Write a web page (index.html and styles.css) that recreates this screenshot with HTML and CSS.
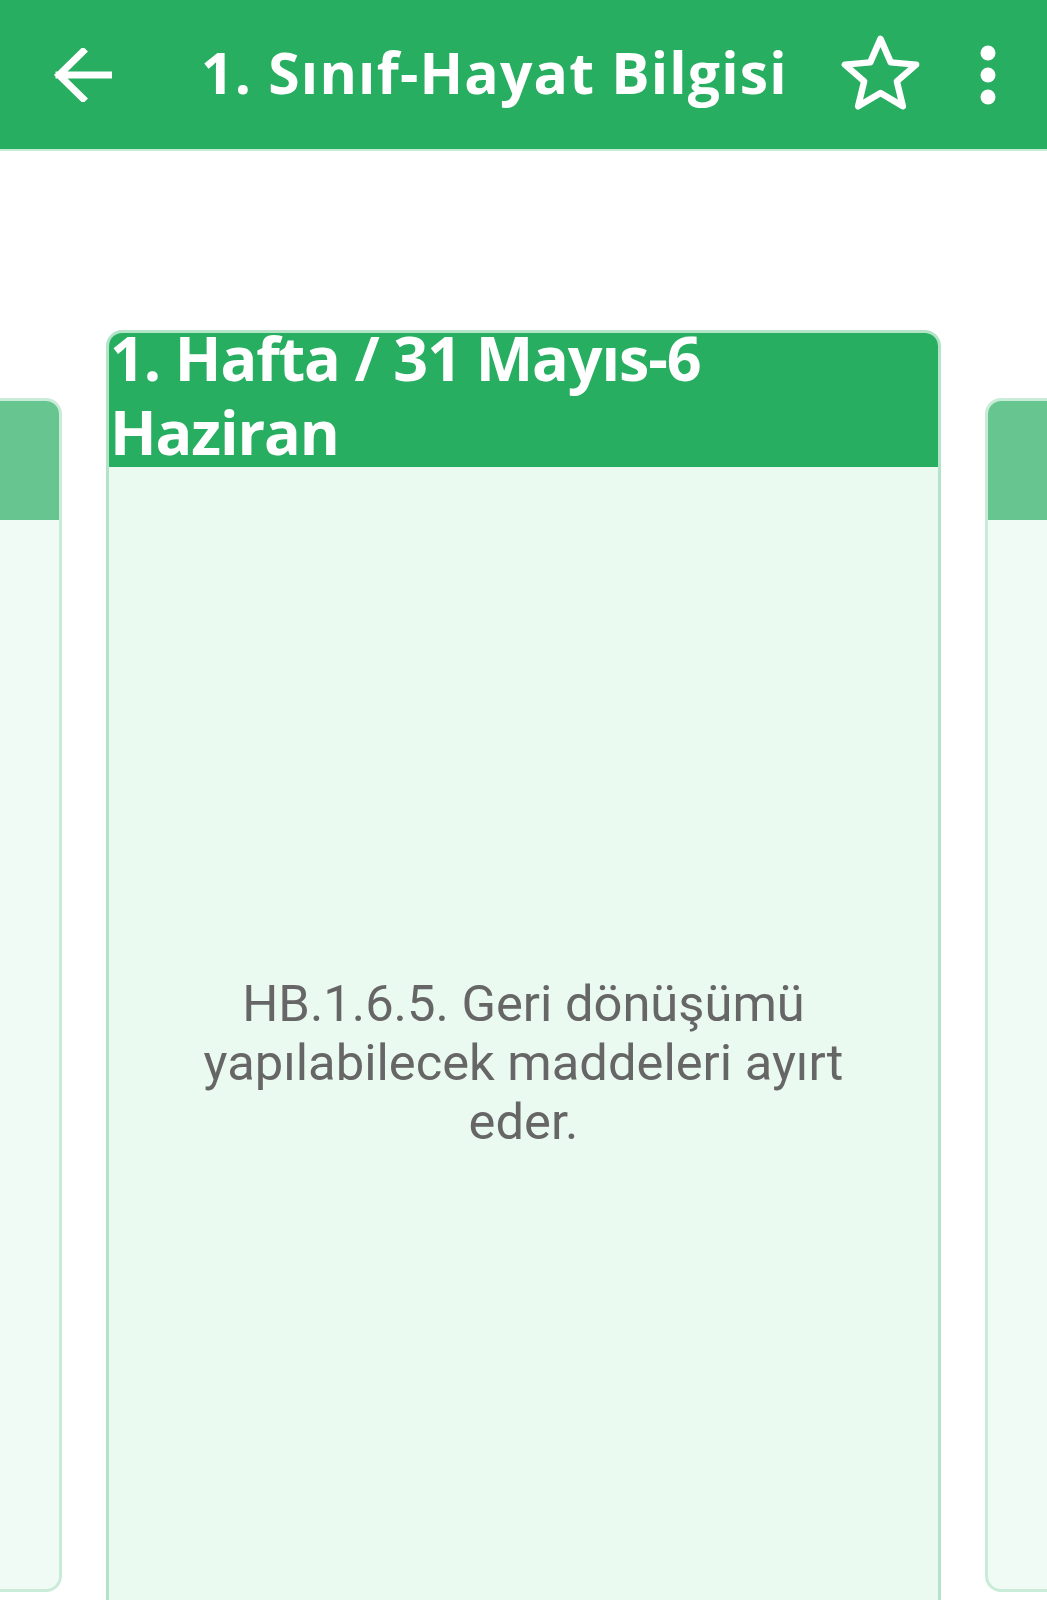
FILE: index.html
```html
<!DOCTYPE html>
<html lang="tr">
<head>
<meta charset="utf-8">
<title>1. Sınıf-Hayat Bilgisi</title>
<link rel="stylesheet" href="styles.css">
</head>
<body>
<header class="appbar">
  <svg class="back" viewBox="0 0 59 54" aria-hidden="true">
    <path d="M56 27 H6 M30 3.5 L6 27 L30 50.5" fill="none" stroke="#fff" stroke-width="7" stroke-linecap="square" stroke-linejoin="miter"/>
  </svg>
  <h1 class="title">1. Sınıf-Hayat Bilgisi</h1>
  <svg class="star" viewBox="0 0 24 24" aria-hidden="true">
    <polygon points="12,2.6 14.7,8.8 21.4,9.4 16.3,13.8 17.9,20.4 12,16.9 6.1,20.4 7.7,13.8 2.6,9.4 9.3,8.8" fill="none" stroke="#fff" stroke-width="1.7" stroke-linejoin="round"/>
  </svg>
  <svg class="more" viewBox="0 0 20 60" aria-hidden="true">
    <circle cx="10" cy="8" r="7.5" fill="#fff"/>
    <circle cx="10" cy="30" r="7.5" fill="#fff"/>
    <circle cx="10" cy="52" r="7.5" fill="#fff"/>
  </svg>
</header>
<main class="pager">
  <section class="card card-side">
    <div class="card-head"></div>
    <div class="card-body"></div>
  </section>
  <section class="card card-main">
    <div class="card-head"><h2 class="week">1. Hafta / 31 Mayıs-6 Haziran</h2></div>
    <div class="card-body"><p class="goal">HB.1.6.5. Geri dönüşümü yapılabilecek maddeleri ayırt eder.</p></div>
  </section>
  <section class="card card-side">
    <div class="card-head"></div>
    <div class="card-body"></div>
  </section>
</main>
</body>
</html>
```
FILE: styles.css
```css
html, body {
  margin: 0;
  padding: 0;
  height: 1600px;
  overflow: hidden;
  background: #ffffff;
}
body {
  font-family: Roboto, "Noto Sans", sans-serif;
}
.appbar {
  height: 149px;
  background: #27ae60;
  border-bottom: 2px solid #c6eed7;
  display: flex;
  align-items: center;
  padding: 0 49px 0 53px;
  box-sizing: content-box;
}
.back {
  width: 59px;
  height: 54px;
  flex: none;
}
.title {
  flex: 1;
  margin: 0 0 6px 89px;
  font-family: "Open Sans", "Noto Sans", sans-serif;
  font-weight: 700;
  font-size: 57px;
  line-height: 64px;
  color: #fff;
  white-space: nowrap;
  letter-spacing: 1.2px;
}
.star {
  width: 91px;
  height: 91px;
  flex: none;
}
.more {
  width: 20px;
  height: 60px;
  flex: none;
  margin-left: 52px;
}
.pager {
  display: flex;
  justify-content: center;
  align-items: center;
  gap: 44px;
  padding-top: 179px;
  overflow: hidden;
}
.card {
  flex: none;
  box-sizing: border-box;
  border: 3px solid #b3e4c8;
  border-radius: 16px;
  background: #eafaf1;
  display: flex;
  flex-direction: column;
}
.card-main {
  width: 835px;
  height: 1330px;
}
.card-side {
  width: 750px;
  height: 1194px;
  opacity: 0.7;
}
.card-head {
  background: #27ae60;
  border-radius: 13px 13px 0 0;
  height: 134px;
  flex: none;
  padding: 0 1px;
}
.card-side .card-head {
  height: 119px;
}
.week {
  margin: -12px 0 0;
  max-width: 700px;
  font-family: "Open Sans", "Noto Sans", sans-serif;
  font-weight: 700;
  font-size: 61px;
  line-height: 74px;
  color: #fff;
  letter-spacing: -1.1px;
}
.card-body {
  flex: 1;
  display: flex;
  align-items: center;
  justify-content: center;
  padding: 0 60px;
}
.goal {
  margin: 0;
  text-align: center;
  font-family: Roboto, "Noto Sans", sans-serif;
  font-size: 50.7px;
  line-height: 59px;
  color: #666666;
}
```
